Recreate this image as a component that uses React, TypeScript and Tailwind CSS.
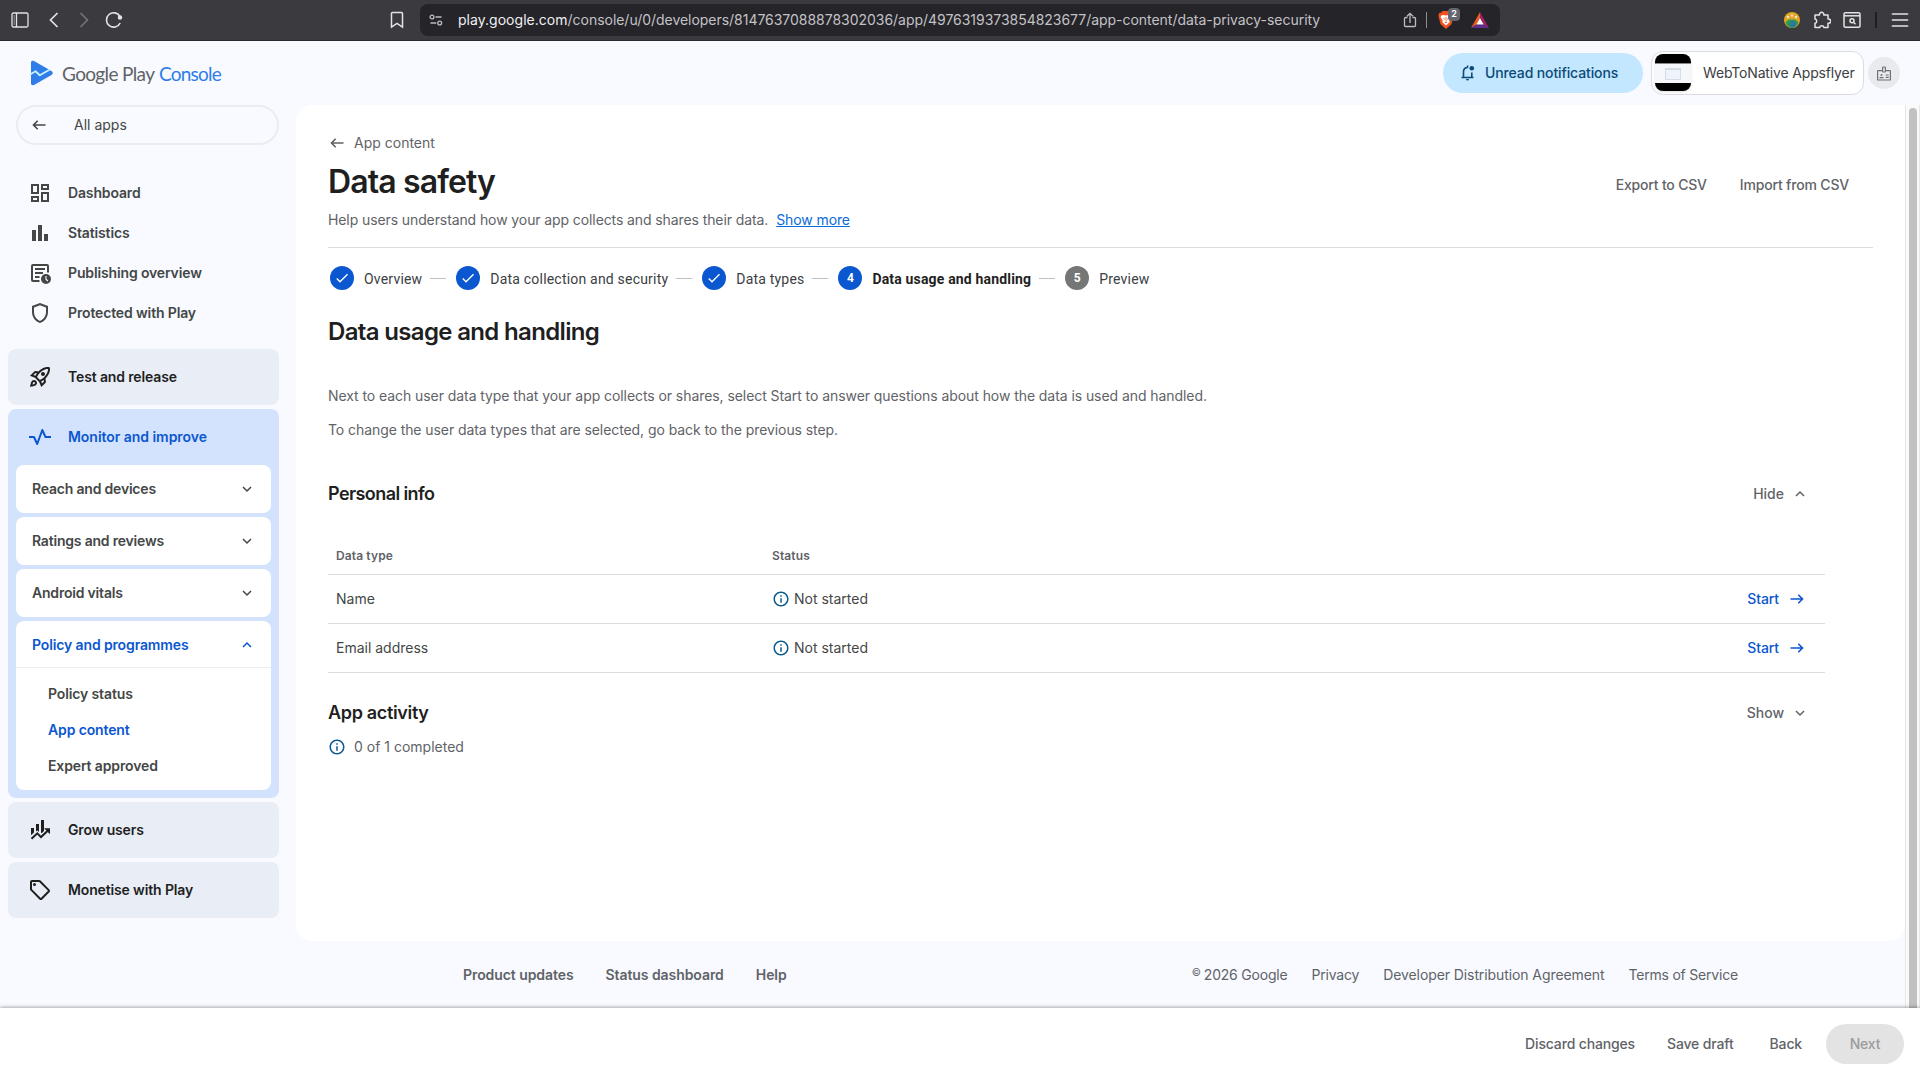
import type { ReactNode } from "react";
import {
  MdBarChart,
  MdCheck,
  MdOutlineDashboard,
  MdOutlineInfo,
  MdOutlineRocketLaunch,
  MdOutlineSell,
  MdOutlineShield,
} from "react-icons/md";

const steps = [
  { label: "Overview", state: "done" },
  { label: "Data collection and security", state: "done" },
  { label: "Data types", state: "done" },
  { label: "Data usage and handling", state: "current" },
  { label: "Preview", state: "todo" },
];

const personalInfo = ["Name", "Email address"];

function Chevron({ up = false, className = "" }: { up?: boolean; className?: string }) {
  return (
    <svg viewBox="0 0 10 10" className={`size-2.5 ${className}`} fill="none" stroke="currentColor" strokeWidth="1.5">
      <path d={up ? "M1 7l4-4 4 4" : "M1 3l4 4 4-4"} />
    </svg>
  );
}

function Arrow({ right = false, className = "" }: { right?: boolean; className?: string }) {
  return (
    <svg viewBox="0 0 14 12" className={`w-3.5 h-3 ${className}`} fill="none" stroke="currentColor" strokeWidth="1.6">
      <path d={right ? "M0.5 6h12M8.3 1.8L12.5 6l-4.2 4.2" : "M13.5 6h-12M5.7 1.8L1.5 6l4.2 4.2"} />
    </svg>
  );
}

function PublishingIcon() {
  return (
    <svg viewBox="0 0 24 24" className="size-6">
      <path d="M20 11.5V5a1 1 0 0 0-1-1H5a1 1 0 0 0-1 1v14a1 1 0 0 0 1 1h6.5" fill="none" stroke="currentColor" strokeWidth="2" />
      <path d="M7 8h10M7 12h8M7 16h4.5" stroke="currentColor" strokeWidth="2" />
      <circle cx="18" cy="18" r="5" fill="currentColor" />
      <path d="M18 15v3.2l1.8 1.8" fill="none" stroke="#f8faff" strokeWidth="1.1" />
    </svg>
  );
}

function PulseIcon() {
  return (
    <svg viewBox="0 0 24 24" className="size-6" fill="none" stroke="currentColor" strokeWidth="2" strokeLinejoin="round">
      <path d="M1 12h5l3.2 7L14.3 5l3.2 7H23" />
    </svg>
  );
}

function GrowIcon() {
  return (
    <svg viewBox="0 0 24 24" className="size-6" fill="currentColor">
      <path d="M3 10h3v4.5L3 17.3zM8 6h3v8l-1.7-1.5L8 13.6zM13 2h3v11l-2.3 2.3-.7-.7z" />
      <path d="M3.5 20.8l5.8-5.5 3.7 3.8 7-6.6" fill="none" stroke="currentColor" strokeWidth="2" />
      <path d="M16 10.2h6v6z" />
    </svg>
  );
}

function ShieldLion() {
  return (
    <svg viewBox="0 0 16 18" className="w-4 h-[18px]">
      <path d="M4.5 0h7l1.6 1.7L15 2l.6 3-2.2 8.3L8 18l-5.4-4.7L.4 5 1 2l1.900-.3z" fill="#f1501f" />
      <path d="M3 4.500L5.500 4 8 4.600l2.500-.6 2.500.5.300 2-2 3 .5 1.500L8 14.500 4.200 11l.5-1.500-2-3z" fill="#fff" />
      <path d="M5 7l1.800.7-.5 1.400zM11 7l-1.800.7.5 1.400zM6.500 11.200L8 10.600l1.500.6L8 12.300zM7.600 6h.8v4h-.8z" fill="#f1501f" />
    </svg>
  );
}

function BrowserBar() {
  return (
    <div className="relative flex h-[41px] shrink-0 items-center border-b border-[#2b2a2e] bg-[#3b3a3e] text-[#e4e3e6]">
      <svg viewBox="0 0 18 16" className="ml-[11px] h-4 w-[18px]" fill="none" stroke="currentColor" strokeWidth="1.3">
        <rect x="1" y="1" width="16" height="14" rx="1.5" />
        <path d="M5.5 1v14" />
        <path d="M3.2 3v10" strokeWidth="1" strokeOpacity="0.5" />
      </svg>
      <svg viewBox="0 0 10 16" className="ml-5 h-4 w-2.5" fill="none" stroke="currentColor" strokeWidth="1.7">
        <path d="M8.5 1L1.5 8l7 7" />
      </svg>
      <svg viewBox="0 0 10 16" className="ml-5 h-4 w-2.5 text-[#77767a]" fill="none" stroke="currentColor" strokeWidth="1.5">
        <path d="M1.5 1l7 7-7 7" />
      </svg>
      <svg viewBox="0 0 18 18" className="ml-4 size-[18px]" fill="none" stroke="currentColor" strokeWidth="1.6">
        <path d="M15 5.5A7.2 7.2 0 1 0 15.2 12" />
        <circle cx="15" cy="6.5" r="2.2" fill="currentColor" stroke="none" />
      </svg>
      <svg viewBox="0 0 14 18" className="ml-[267px] h-[18px] w-3.5" fill="none" stroke="currentColor" strokeWidth="1.5">
        <path d="M1.5 2.5a1 1 0 0 1 1-1h9a1 1 0 0 1 1 1v13.7L7 12.5l-5.5 3.7z" />
      </svg>

      <div className="ml-4 flex h-8 w-[1080px] items-center rounded-lg bg-[#252429]">
        <svg viewBox="0 0 14 12" className="ml-[9px] h-3 w-3.5" fill="none" stroke="#bdbcc0" strokeWidth="1.3">
          <circle cx="3" cy="3" r="1.9" />
          <circle cx="10.7" cy="9" r="1.9" />
          <path d="M6.5 3h6M1.5 9h5.8" />
        </svg>
        <div className="ml-[15px] w-[946px] whitespace-nowrap text-sm tracking-[-0.03px] text-[#c3c2c6]">
          <span className="tracking-[0.03px] text-[#f0eff2]">play.google.com</span>
          /console/u/0/developers/8147637088878302036/app/4976319373854823677/app-content/data-privacy-security
        </div>
        <svg viewBox="0 0 14 16" className="-ml-px h-4 w-3.5" fill="none" stroke="#bdbcc0" strokeWidth="1.3">
          <path d="M4.5 5.5H2.5a1 1 0 0 0-1 1v7a1 1 0 0 0 1 1h9a1 1 0 0 0 1-1v-7a1 1 0 0 0-1-1h-2M7 11V1.5M4 4.3l3-3 3 3" />
        </svg>
        <div className="ml-[9px] h-4 w-px bg-[#8d8c91]" />
        <div className="relative ml-[11px]">
          <ShieldLion />
          <span className="absolute -top-[3px] left-2.5 flex h-[13px] w-3 items-center justify-center rounded bg-[#64656f] text-[9px] font-semibold text-white">
            2
          </span>
        </div>
        <svg viewBox="0 0 18 16" className="ml-[17px] h-4 w-[18px]">
          <path d="M9 0L0 16l5.5-3.5L9 6z" fill="#f15a24" />
          <path d="M9 0l9 16-5.5-3.5L9 6z" fill="#9e1f63" />
          <path d="M0 16h18l-5.5-3.5h-7z" fill="#5f2d91" />
          <path d="M9 6l3.7 6.5H5.3z" fill="#fff" />
        </svg>
      </div>

      <div className="ml-auto flex items-center pr-[11px]">
        <svg viewBox="0 0 16 16" className="size-4">
          <circle cx="8" cy="8" r="8" fill="#e0a526" />
          <path d="M1.5 10.5C3 8 5 7.5 8 7.5s5 .5 6.5 3A8 8 0 0 1 8 16a8 8 0 0 1-6.5-5.5z" fill="#2f9a4d" />
          <circle cx="8.5" cy="12" r="3" fill="#2a6fb5" />
          <path d="M6 10.5l3 .5-1 2.5z" fill="#2f9a4d" />
          <circle cx="4" cy="5" r="1.3" fill="#f6e3bd" />
          <circle cx="8" cy="3.5" r="1.3" fill="#f6e3bd" />
          <circle cx="12" cy="5" r="1.3" fill="#f6e3bd" />
        </svg>
        <svg viewBox="0 0 18 18" className="ml-[13px] size-[18px]" fill="none" stroke="currentColor" strokeWidth="1.5" strokeLinejoin="round">
          <path d="M2 4h4.5a2.2 2.2 0 1 1 4.3 0H15v4a2.2 2.2 0 1 1 0 4.3v4.2h-4a2.2 2.2 0 0 0-4.3 0H2v-4.2a2.2 2.2 0 0 0 0-4.3z" />
        </svg>
        <svg viewBox="0 0 18 16" className="ml-3 h-4 w-[18px]" fill="none" stroke="currentColor" strokeWidth="1.5">
          <rect x="1" y="0.8" width="16" height="14.4" rx="1.5" />
          <path d="M1 3.8h16" />
          <circle cx="9" cy="8.8" r="2" />
          <path d="M10.5 10.3l2 2" />
        </svg>
        <div className="ml-3.5 h-4 w-0.5 bg-[#1f1e22]" />
        <svg viewBox="0 0 18 16" className="ml-3.5 h-4 w-[18px]" fill="none" stroke="currentColor" strokeWidth="1.7" strokeLinecap="round">
          <path d="M1.5 2h15M1.5 8h15M1.5 14h15" />
        </svg>
      </div>
    </div>
  );
}

function Header() {
  return (
    <header className="flex h-16 shrink-0 items-center">
      <svg viewBox="0 0 24 26" className="ml-[30px] h-[26px] w-6">
        <path d="M1 2.5C1 .9 2.6.3 4 1.100l17.500 10c1.700 1 1.700 2.800 0 3.800L4 24.900c-1.400.8-3 .1-3-1.400z" fill="#2f7de9" />
        <path d="M0 14.500l5.500-3.200 4.300 3.900 10.500-6" fill="none" stroke="#c9f1fb" strokeWidth="1.9" strokeLinejoin="round" />
      </svg>
      <div className="ml-2 flex pt-0.5 font-[Lato,sans-serif] text-[19px]">
        <span className="w-[95px] tracking-[-0.64px] text-[#5f6368]">Google Play</span>
        <span className="ml-0.5 tracking-[-0.76px] text-[#2f7de9]">Console</span>
      </div>

      <div className="ml-auto flex items-center">
        <button className="flex h-10 w-[200px] items-center rounded-full bg-[#c2e7ff] pl-[18px] font-medium tracking-[-0.12px] text-[#0b4a78]">
          <svg viewBox="0 0 14 16" className="h-4 w-3.5" fill="none" stroke="currentColor" strokeWidth="1.6">
            <path d="M0.5 12.5h12M2.5 12.5V6.8c0-2.6 1.7-4.3 4.3-4.3M10.8 7.5v5M6.6.5v2" />
            <path d="M5 14h3a1.5 1.5 0 0 1-3 0z" fill="currentColor" stroke="none" />
            <circle cx="10.8" cy="3.3" r="2.3" fill="currentColor" stroke="none" />
          </svg>
          <span className="ml-2.5">Unread notifications</span>
        </button>
        <div className="mb-px ml-2 flex h-11 w-[213px] items-center rounded-xl border border-[#dadce3] bg-white pl-[3px]">
          <div className="flex h-[37px] w-9 flex-col overflow-hidden rounded-lg bg-black shadow">
            <div className="mt-[9px] flex h-5 items-center justify-center border-t border-[#888] bg-[#f5f7fa]">
              <div className="h-3 w-4 border border-t-2 border-[#d5dce5] bg-[#eef4fb]" />
            </div>
          </div>
          <span className="ml-3 tracking-[-0.16px] text-[#3c4043]">WebToNative Appsflyer</span>
        </div>
        <div className="mr-5 ml-1 flex size-8 items-center justify-center rounded-full bg-[#e9eaee] text-[#6c6f73]">
          <svg viewBox="0 0 14 15" className="h-[15px] w-3.5" fill="none" stroke="currentColor" strokeWidth="1.2">
            <path d="M5 4.600H1.200a.6.6 0 0 0-.6.6v8.200c0 .3.300.6.600.6h11.600c.3 0 .6-.3.600-.6V5.200a.6.6 0 0 0-.6-.6H9" />
            <rect x="5.6" y="1" width="2.8" height="5" rx="0.8" />
            <path d="M8.7 9h3M8.7 11.3h3M2.5 11.6h4" />
            <circle cx="4.5" cy="9" r="1" fill="currentColor" stroke="none" />
          </svg>
        </div>
      </div>
    </header>
  );
}

function NavItem({ icon, label, className = "h-10" }: { icon: ReactNode; label: string; className?: string }) {
  return (
    <div className={`flex items-center pl-5 ${className}`}>
      {icon}
      <span className="ml-4 font-semibold">{label}</span>
    </div>
  );
}

function SubCard({ label }: { label: string }) {
  return (
    <div className="flex h-12 items-center justify-between rounded-lg bg-white pr-[19px] pl-4 font-semibold tracking-[-0.2px]">
      {label}
      <Chevron />
    </div>
  );
}

function Sidebar() {
  return (
    <nav className="w-[296px] shrink-0 pr-[17px] pl-2 tracking-[-0.14px] text-[#444746]">
      <div className="ml-2 flex h-10 items-center rounded-full border-2 border-[#e8ecf4] pl-3.5 tracking-normal">
        <Arrow />
        <span className="ml-[28px]">All apps</span>
      </div>
      <div className="mt-7">
        <NavItem icon={<MdOutlineDashboard className="size-6" />} label="Dashboard" />
        <NavItem icon={<MdBarChart className="size-6" />} label="Statistics" />
        <NavItem icon={<PublishingIcon />} label="Publishing overview" />
        <NavItem icon={<MdOutlineShield className="size-6" />} label="Protected with Play" />
      </div>
      <div className="mt-4 flex flex-col gap-1">
        <NavItem
          icon={<MdOutlineRocketLaunch className="size-6" />}
          label="Test and release"
          className="h-14 rounded-lg bg-[#e8edf6] text-[#1f1f1f]"
        />
        <div className="rounded-lg bg-[#d3e3fd] pb-2">
          <NavItem icon={<PulseIcon />} label="Monitor and improve" className="h-14 tracking-[-0.04px] text-[#0b57d0]" />
          <div className="flex flex-col gap-1 px-2">
            <SubCard label="Reach and devices" />
            <SubCard label="Ratings and reviews" />
            <SubCard label="Android vitals" />
            <div className="h-[169px] rounded-lg bg-white font-semibold tracking-[-0.13px]">
              <div className="flex h-[47px] items-center justify-between border-b border-[#eceef1] pt-0.5 pr-[19px] pl-4 text-[#0b57d0]">
                Policy and programmes
                <Chevron up />
              </div>
              <div className="flex flex-col pt-2 pl-8 leading-9">
                <span>Policy status</span>
                <span className="text-[#0b57d0]">App content</span>
                <span>Expert approved</span>
              </div>
            </div>
          </div>
        </div>
        <NavItem icon={<GrowIcon />} label="Grow users" className="h-14 rounded-lg bg-[#e8edf6] text-[#1f1f1f]" />
        <NavItem
          icon={<MdOutlineSell className="size-6" />}
          label="Monetise with Play"
          className="h-14 rounded-lg bg-[#e8edf6] text-[#1f1f1f]"
        />
      </div>
    </nav>
  );
}

function Stepper() {
  return (
    <div className="mt-[18px] ml-0.5 flex h-6 items-center font-[Roboto,sans-serif] tracking-[0.2px] text-[#3c4043]">
      {steps.map((step, i) => (
        <div key={step.label} className="flex items-center">
          {i > 0 && <div className="mr-2.5 ml-2 h-px w-4 bg-[#bdc1c6]" />}
          <div
            className={`flex size-6 items-center justify-center rounded-full text-xs font-bold text-white ${
              step.state === "todo" ? "bg-[#747775]" : "bg-[#0b57d0]"
            }`}
          >
            {step.state === "done" ? <MdCheck className="size-4" /> : i + 1}
          </div>
          <span className={`mt-0.5 ml-2.5 ${step.state === "current" ? "font-bold tracking-[0.17px] text-[#1f1f1f]" : ""}`}>
            {step.label}
          </span>
        </div>
      ))}
    </div>
  );
}

function Content() {
  return (
    <main className="h-[836px] rounded-2xl rounded-tr-none bg-white pr-8 pl-8 text-[#5f6368]">
      <div className="flex h-[143px] justify-between border-b border-[#dadce0]">
        <div>
          <div className="mt-[27px] flex h-[22px] items-center pl-0.5">
            <Arrow />
            <span className="ml-[10px]">App content</span>
          </div>
          <h1 className="mt-[7px] text-[32px] leading-[42px] font-semibold tracking-[-0.88px] text-[#1f1f1f]">Data safety</h1>
          <div className="mt-[7px] leading-5 tracking-[-0.1px]">
            Help users understand how your app collects and shares their data.
            <a className="ml-2 text-[#0b6bd8] underline">Show more</a>
          </div>
        </div>
        <div className="mt-[68px] mr-6 flex h-6 items-center gap-[33px] font-medium tracking-[-0.18px]">
          <span>Export to CSV</span>
          <span>Import from CSV</span>
        </div>
      </div>

      <Stepper />

      <h2 className="mt-[26px] text-2xl font-semibold tracking-[-0.66px] text-[#1f1f1f]">Data usage and handling</h2>
      <p className="mt-[38px] leading-5 tracking-[-0.07px]">
        Next to each user data type that your app collects or shares, select Start to answer questions about how the data is
        used and handled.
      </p>
      <p className="mt-3.5 leading-5 tracking-[-0.073px]">
        To change the user data types that are selected, go back to the previous step.
      </p>

      <section className="mr-12">
        <div className="mt-10 flex h-7 items-center justify-between pr-5">
          <h3 className="text-lg font-semibold tracking-[-0.58px] text-[#1f1f1f]">Personal info</h3>
          <div className="flex items-center gap-[11px] font-medium">
            Hide
            <Chevron up />
          </div>
        </div>
        <div className="mt-7 flex h-[39px] items-center border-b border-[#dadce0] pt-0.5 pl-2 text-xs font-semibold tracking-[0.12px]">
          <span className="w-[436px]">Data type</span>
          <span>Status</span>
        </div>
        {personalInfo.map((name) => (
          <div key={name} className="flex h-[49px] items-center border-b border-[#dadce0] pr-[21px] pl-2 text-[#444746]">
            <span className="w-[436px]">{name}</span>
            <MdOutlineInfo className="size-[18px] text-[#0b5a8f]" />
            <span className="ml-1">Not started</span>
            <span className="ml-auto flex items-center gap-[11px] font-medium tracking-[-0.1px] text-[#0b57d0]">
              Start
              <Arrow right />
            </span>
          </div>
        ))}
        <div className="mt-[26px] flex h-7 items-center justify-between pr-5">
          <h3 className="text-lg font-semibold tracking-[-0.33px] text-[#1f1f1f]">App activity</h3>
          <div className="flex items-center gap-[11px] font-medium">
            Show
            <Chevron />
          </div>
        </div>
        <div className="mt-2.5 flex h-5 items-center">
          <MdOutlineInfo className="size-[18px] text-[#0b5a8f]" />
          <span className="ml-2">0 of 1 completed</span>
        </div>
      </section>
    </main>
  );
}

export default function App() {
  return (
    <div className="flex h-[1080px] w-[1920px] flex-col overflow-hidden bg-[#f8faff] font-[Inter,sans-serif] text-sm">
      <BrowserBar />
      <Header />
      <div className="flex h-[903px] shrink-0">
        <Sidebar />
        <div className="flex-1">
          <Content />
          <footer className="flex h-[67px] items-center justify-between pr-[167px] pl-[167px] text-[#5f6368]">
            <div className="flex gap-8 font-semibold tracking-[-0.07px]">
              <span>Product updates</span>
              <span>Status dashboard</span>
              <span>Help</span>
            </div>
            <div className="flex gap-6 tracking-[-0.2px]">
              <span className="flex gap-[3px]">
                <span className="text-[10px]">©</span>
                2026 Google
              </span>
              <span>Privacy</span>
              <span className="tracking-[-0.09px]">Developer Distribution Agreement</span>
              <span>Terms of Service</span>
            </div>
          </footer>
        </div>
        <div className="w-[15px] border-x border-[#e8e8e8] bg-[#fafafa] pt-[3px] pl-[3px]">
          <div className="h-[900px] w-2 rounded-t-full bg-[#c1c1c1]" />
        </div>
      </div>
      <div className="relative flex flex-1 items-center justify-end bg-white pr-4 font-medium tracking-[-0.15px] text-[#5f6368] shadow-[0_0_4px_rgba(0,0,0,0.5)]">
        <span>Discard changes</span>
        <span className="ml-8">Save draft</span>
        <span className="ml-9">Back</span>
        <button className="ml-6 h-10 w-[78px] rounded-full bg-[#e3e3e3] text-[#9a9b9c]">Next</button>
      </div>
    </div>
  );
}
